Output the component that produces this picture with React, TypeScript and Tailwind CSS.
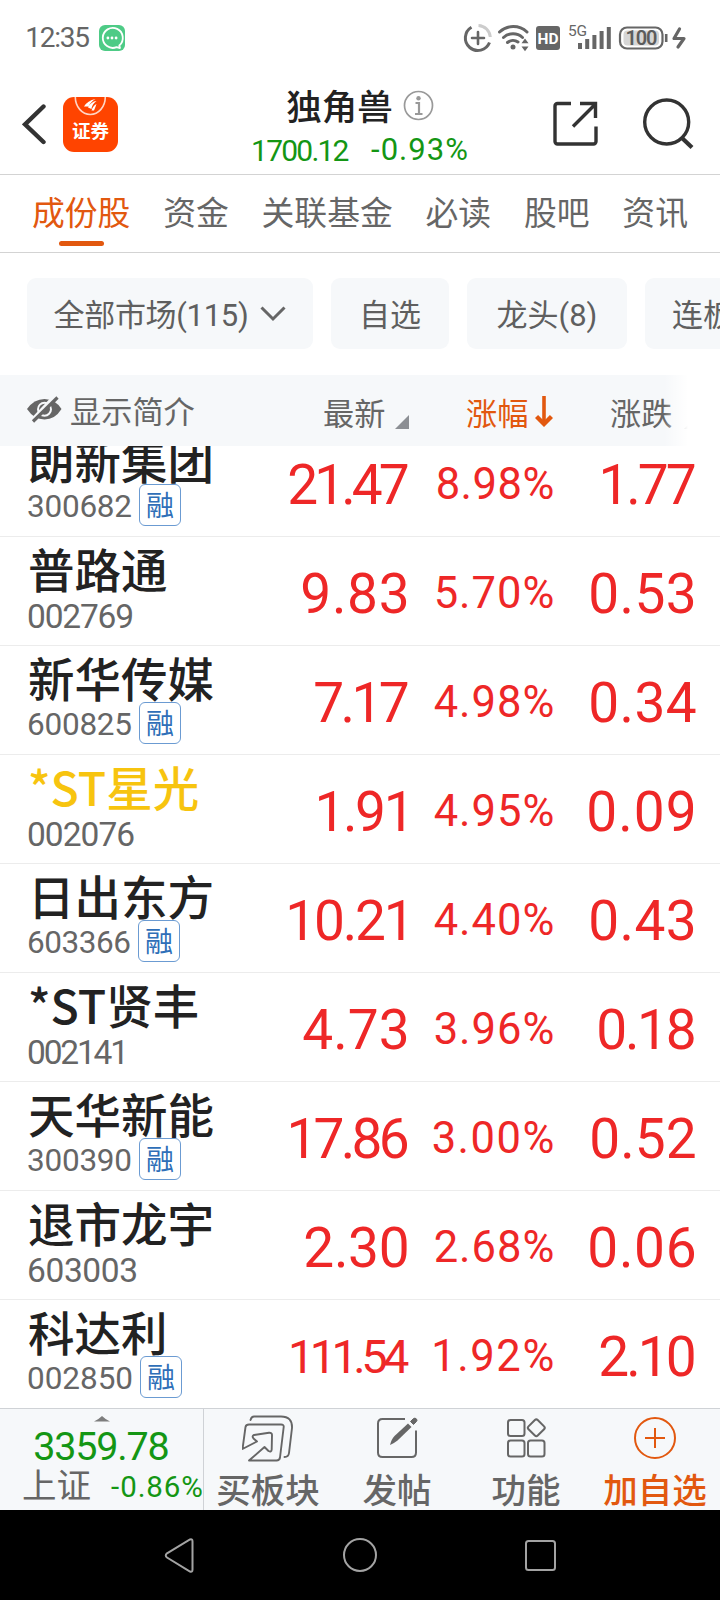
import React from "react";

const CJK = "font-['Noto_Sans_CJK_SC',sans-serif]";
const NUM = "font-['Roboto','Noto_Sans_CJK_SC',sans-serif]";

/* Each figure is a text with the width, in pixels, that its ink takes. */
type Figure = [text: string, width: number];

type Stock = {
  name: string;
  code: Figure;
  price: Figure;
  pct: Figure;
  chg: Figure;
  margin?: boolean;
  highlight?: boolean;
};

const stocks: Stock[] = [
  { name: "朗新集团", code: ["300682", 103], price: ["21.47", 119], pct: ["8.98%", 116], chg: ["1.77", 93], margin: true },
  { name: "普路通", code: ["002769", 105], price: ["9.83", 106], pct: ["5.70%", 118], chg: ["0.53", 105] },
  { name: "新华传媒", code: ["600825", 103], price: ["7.17", 93], pct: ["4.98%", 118], chg: ["0.34", 105], margin: true },
  { name: "*ST星光", code: ["002076", 106], price: ["1.91", 90], pct: ["4.95%", 118], chg: ["0.09", 107], highlight: true },
  { name: "日出东方", code: ["603366", 102], price: ["10.21", 119], pct: ["4.40%", 118], chg: ["0.43", 105], margin: true },
  { name: "*ST贤丰", code: ["002141", 97], price: ["4.73", 104], pct: ["3.96%", 118], chg: ["0.18", 97] },
  { name: "天华新能", code: ["300390", 103], price: ["17.86", 118], pct: ["3.00%", 120], chg: ["0.52", 104], margin: true },
  { name: "退市龙宇", code: ["603003", 109], price: ["2.30", 103], pct: ["2.68%", 118], chg: ["0.06", 106] },
  { name: "科达利", code: ["002850", 104], price: ["111.54", 117], pct: ["1.92%", 119], chg: ["2.10", 95], margin: true },
];

const advances: Record<string, number> = { ".": 0.264, "%": 0.733, "-": 0.276, ":": 0.242 };

function Fig({ fig, size, className = "" }: { fig: Figure; size: number; className?: string }) {
  const [text, width] = fig;
  const left = (text.startsWith("1") ? 0.065 : 0.03) * size;
  const right = (text.endsWith("1") ? 0.12 : 0.03) * size;
  const natural = text.split("").reduce((sum, c) => sum + (advances[c] ?? 0.5617) * size, 0);
  const spacing = (width - (natural - left - right)) / (text.length - 1);
  return (
    <span
      className={`${NUM} whitespace-nowrap [font-kerning:none] ${className}`}
      style={{ fontSize: size, letterSpacing: spacing, marginLeft: -left, marginRight: -spacing - right }}
    >
      {text}
    </span>
  );
}

function StatusBar() {
  return (
    <div className="flex h-[75px] shrink-0 items-center justify-between pr-[34px] pl-[27px]">
      <div className="flex items-center gap-[10px]">
        <Fig fig={["12:35", 62]} size={28} className="leading-[30px] text-[#666]" />
        <svg width="26" height="26" viewBox="0 0 26 26">
          <rect width="26" height="26" rx="6" fill="#4ecb86" />
          <path d="M20.3 20.5 L21 23 L17.5 22.2 A10 10 0 1 1 20.3 20.5Z" fill="none" stroke="#fff" strokeWidth="1.8" strokeLinejoin="round" />
          <circle cx="8.9" cy="13" r="1.4" fill="#fff" />
          <circle cx="13" cy="13" r="1.4" fill="#fff" />
          <circle cx="17.1" cy="13" r="1.4" fill="#fff" />
        </svg>
      </div>
      <svg width="224" height="32" viewBox="462 21 224 32" fill="none">
        <g stroke="#666" strokeWidth="3">
          <path d="M471.500 26.200 A12.500 12.500 0 1 0 489.500 41.500" />
          <path d="M478.5 24.5 A12.5 12.5 0 0 1 490.3 36" stroke="#ccc" />
          <path d="M478 31v12M472 37h12" strokeWidth="2.6" strokeLinecap="round" />
        </g>
        <g stroke="#666" strokeWidth="3" strokeLinecap="round">
          <path d="M499.5 31 A20 20 0 0 1 527 31" />
          <path d="M503.5 36.5 A14 14 0 0 1 522.5 36.5" />
          <path d="M507.5 41.5 A8.5 8.5 0 0 1 518 41" />
        </g>
        <circle cx="513" cy="46" r="2.5" fill="#666" />
        <path d="M525 37.5l3.5 4.7h-7zM525 50.3l3.5-4.7h-7z" fill="#666" />
        <rect x="536" y="25" width="24" height="24" rx="3" fill="#666" />
        <text x="548" y="42.500" textAnchor="middle" fontFamily="Roboto" fontWeight="700" fontSize="15.500" fill="#fff" textLength="21" lengthAdjust="spacingAndGlyphs">HD</text>
        <text x="568" y="35" fontFamily="Roboto" fontSize="15.500" fill="#666" textLength="19">5G</text>
        <path d="M580 48v-6M587.2 48v-10M594.4 48v-14M601.6 48v-18M608.8 48v-22" stroke="#666" strokeWidth="4" />
        <rect x="620" y="26.5" width="42.5" height="21" rx="7" stroke="#666" strokeWidth="2.2" />
        <rect x="623.5" y="29.5" width="35.5" height="15" rx="4" fill="#d6d6d6" />
        <text x="641.5" y="44" textAnchor="middle" fontFamily="Roboto" fontWeight="600" fontSize="20" fill="#5c5c5c" textLength="32">100</text>
        <path d="M666.2 33v8" stroke="#666" strokeWidth="2.6" />
        <path d="M679.500 28l-5.500 9.500h10l-6 8.500" stroke="#666" strokeWidth="3.200" strokeLinecap="round" strokeLinejoin="round" />
      </svg>
    </div>
  );
}

function Header() {
  return (
    <header className="flex h-[100px] shrink-0 border-b border-[#d3d3d3]">
      <div className="flex w-[253px] items-start pl-[22px] pt-[22px]">
        <svg width="26" height="54" viewBox="22 97 26 54">
          <path d="M43.5 106.5L25 124.3L43.5 142" fill="none" stroke="#333" strokeWidth="4.4" strokeLinecap="round" />
        </svg>
        <div className="relative ml-[15px] flex h-[55px] w-[55px] justify-center overflow-hidden rounded-[11px] bg-[#ff4400]">
          <svg className="absolute inset-0" width="55" height="55" viewBox="0 0 55 55">
            <path d="M12.3 0A15 17.5 0 0 0 42.3 0" fill="none" stroke="#ffd5c5" strokeWidth="1.600" />
            <path d="M21 9.500Q24.500 3.500 32.500 2Q27.500 5 25.500 9.500ZM25 10.500Q28 4.500 33.500 4Q29 7 28.500 12ZM28.500 13.500Q30 8.500 33.500 7Q32.500 10 31 13.500Z" fill="#fff" />
          </svg>
          <span className={`${CJK} pt-[20px] text-[18.5px] leading-[26px] font-bold text-white`}>证券</span>
        </div>
      </div>
      <div className="flex w-[214px] flex-col items-center">
        <div className="mt-[9px] flex h-[42px] items-center gap-[10px]">
          <span className={`${CJK} text-[35.5px] leading-[42px] font-medium whitespace-nowrap text-[#222]`}>独角兽</span>
          <svg className="mt-[1px]" width="31" height="31" viewBox="0 0 31 31">
            <circle cx="15.5" cy="15.5" r="14" fill="none" stroke="#999" strokeWidth="1.7" />
            <circle cx="15.5" cy="8.3" r="2.2" fill="#999" />
            <path d="M12.500 13h3.500v11M12 24h7.500" stroke="#999" strokeWidth="2.200" fill="none" />
          </svg>
        </div>
        <div className="mt-[7px] flex h-[34px] w-full items-center justify-between text-[#149614]">
          <Fig fig={["1700.12", 95.5]} size={30} />
          <Fig fig={["-0.93%", 95]} size={31} />
        </div>
      </div>
      <svg className="mt-[17px] ml-[80px]" width="160" height="64" viewBox="547 92 160 64" fill="none" stroke="#333" strokeWidth="3.400">
        <path d="M571 103.500h-13.500a2.500 2.500 0 0 0-2.500 2.500v35.500a2.500 2.500 0 0 0 2.500 2.500h36a2.500 2.500 0 0 0 2.500-2.500v-15" />
        <path d="M580 103.500h15.500v14.500M595.500 104L573 126.500" />
        <circle cx="666.7" cy="122" r="22" />
        <path d="M682 138L692 147.500" strokeWidth="4.200" />
      </svg>
    </header>
  );
}

const tabs = ["成份股", "资金", "关联基金", "必读", "股吧", "资讯"];

function Tabs() {
  return (
    <nav className="flex h-[78px] shrink-0 justify-between border-b border-[#d3d3d3] px-[32px]">
      {tabs.map((t, i) => (
        <div key={t} className="flex flex-col items-center pt-[13px]">
          <span className={`${CJK} text-[32.8px] leading-[46px] whitespace-nowrap ${i === 0 ? "text-[#e2580f]" : "text-[#666]"}`}>{t}</span>
          {i === 0 && <span className="mt-[7px] h-[5px] w-[45px] rounded-full bg-[#e2580f]" />}
        </div>
      ))}
    </nav>
  );
}

function Filters() {
  const pill = `flex h-[71px] shrink-0 items-center justify-center rounded-[9px] bg-[#f6f8fa] pt-[5px] text-[31px] whitespace-nowrap text-[#5f5f5f] ${NUM}`;
  return (
    <div className="flex h-[122px] shrink-0 gap-[18px] overflow-hidden pt-[25px] pl-[27px]">
      <div className={`${pill} w-[286px] gap-[12px]`}>
        <span className="tracking-[-0.3px]">全部市场(115)</span>
        <svg className="-mt-[5px]" width="26" height="16" viewBox="0 0 26 16">
          <path d="M1.500 1.500L13 13L24.500 1.500" fill="none" stroke="#666" strokeWidth="3" />
        </svg>
      </div>
      <div className={`${pill} w-[118px]`}>自选</div>
      <div className={`${pill} w-[160px]`}>龙头(8)</div>
      <div className={`${pill} w-[116px]`}>连板</div>
    </div>
  );
}

function TableHead() {
  return (
    <div className={`${CJK} relative flex h-[71px] shrink-0 items-center bg-[#f6f8fa] text-[31.200px] leading-[40px] whitespace-nowrap text-[#666]`}>
      <div className="flex w-[323px] items-center gap-[8px] pb-[2px] pl-[27px]">
        <svg width="35" height="28" viewBox="0 0 35 28">
          <path d="M0 13Q7 3 17.5 3Q28 3 34.5 13Q28 23.5 17.5 23.5Q7 23.5 0 13Z" fill="#666" />
          <circle cx="17.5" cy="13.2" r="6.5" fill="none" stroke="#f6f8fa" strokeWidth="2" />
          <path d="M3 26.5L28 0" stroke="#f6f8fa" strokeWidth="4" />
          <path d="M6 25.5L30.5 1.5" stroke="#666" strokeWidth="3.2" />
        </svg>
        <span>显示简介</span>
      </div>
      <div className="flex w-[143px] items-center pt-[2px]">
        <span>最新</span>
        <svg className="mt-[21px] ml-[10px]" width="14" height="14" viewBox="0 0 14 14"><path d="M14 0V14H0Z" fill="#8c8f94" /></svg>
      </div>
      <div className="flex w-[144px] items-center pt-[2px] text-[#e2580f]">
        <span>涨幅</span>
        <svg className="ml-[7px]" width="18" height="32" viewBox="0 0 18 32">
          <path d="M9 0V28" stroke="#e2580f" strokeWidth="3.6" />
          <path d="M1.5 20.5L9 28L16.5 20.5" fill="none" stroke="#e2580f" strokeWidth="4.4" />
        </svg>
      </div>
      <div className="flex items-center pt-[2px]">
        <span>涨跌</span>
        <svg className="mt-[21px] ml-[12px]" width="14" height="14" viewBox="0 0 14 14"><path d="M14 0V14H0Z" fill="#8c8f94" /></svg>
      </div>
      <div className="absolute top-0 right-0 h-full w-[56px] bg-linear-to-r from-white/0 to-white to-[24px]" />
    </div>
  );
}

function Row({ s }: { s: Stock }) {
  return (
    <div className="flex h-[109px] shrink-0 items-start border-t border-[#ececec] text-[#ee2727]">
      <div className="w-[248px] shrink-0 pl-[28px]">
        <div className={`${CJK} mt-[6px] h-[48px] text-[46.5px] leading-[50px] font-medium whitespace-nowrap ${s.highlight ? "text-[#f7c40f]" : "text-[#222]"}`}>{s.name}</div>
        <div className="mt-[2px] flex h-[42px] items-center gap-[8px] text-[#666]">
          <Fig fig={s.code} size={s.margin ? 31.5 : 33.5} className={s.margin ? "mt-[3px] leading-[42px]" : "mt-[5px] leading-[42px]"} />
          {s.margin && (
            <span className={`${CJK} flex h-[42px] w-[42px] items-center justify-center rounded-[6px] border-[1.5px] border-[#6b9bd2] text-[28px] leading-[38px] text-[#2f6fb8]`}>
              <span className="-mt-[2px]">融</span>
            </span>
          )}
        </div>
      </div>
      <div className="flex h-[115px] w-[160px] items-center justify-end">
        <Fig fig={s.price} size={s.price[0].length > 5 ? 47 : 55} />
      </div>
      <div className="flex h-[113px] w-[145px] items-center justify-end">
        <Fig fig={s.pct} size={43.5} />
      </div>
      <div className="flex h-[115px] w-[142px] items-center justify-end">
        <Fig fig={s.chg} size={55} />
      </div>
    </div>
  );
}

function BuyIcon() {
  return (
    <svg width="54" height="50" viewBox="242 1413 54 50" fill="none" stroke="#666" strokeWidth="1.900" strokeLinejoin="round" strokeLinecap="round">
      <path d="M250.500 1420Q251.500 1416.500 254 1416.500H281Q292.500 1416.500 292 1428L289 1453Q288.500 1457 284.500 1457" />
      <path d="M242.500 1449L245.500 1427Q246 1424.500 249 1424.500H281Q284 1424.500 283.700 1427L280 1457.500Q279.500 1460.500 276.500 1460.500H249L264.500 1447L268.500 1451Q271.500 1452.500 271.700 1449.500L272 1435Q272 1432.500 269 1432.700L254 1435Q251.500 1436 253.500 1438.500L257 1441.500Z" />
    </svg>
  );
}
function PostIcon() {
  return (
    <svg width="44" height="50" viewBox="376 1413 44 50" fill="none" stroke="#666" strokeWidth="2">
      <path d="M405 1419H382.500Q378 1419 378 1423.500V1452.500Q378 1457 382.500 1457H411.500Q416 1457 416 1452.500V1430.500" />
      <path d="M390 1445Q391.500 1439 394.500 1436L408 1423.500L411.500 1427L397.500 1440.500Q394.500 1443 390 1445Z" fill="#666" stroke="none" />
      <path d="M410.500 1421.500L413.500 1418.500Q415 1417.500 416.500 1419Q417.500 1420.500 416.500 1421.500L413.500 1424.500Z" fill="#666" stroke="#666" strokeWidth="1" />
    </svg>
  );
}
function GridIcon() {
  return (
    <svg width="44" height="50" viewBox="505 1413 44 50" fill="none" stroke="#666" strokeWidth="2">
      <rect x="508" y="1420" width="16.5" height="16" rx="2.5" />
      <rect x="508" y="1440.5" width="16.5" height="16" rx="2.5" />
      <rect x="528" y="1440.5" width="16.5" height="16" rx="2.5" />
      <rect x="529.8" y="1421.3" width="13" height="13" rx="2" transform="rotate(45 536.3 1427.8)" />
    </svg>
  );
}
function AddIcon() {
  return (
    <svg width="44" height="50" viewBox="634 1413 44 50" fill="none" stroke="#e2580f" strokeWidth="2">
      <circle cx="655" cy="1438" r="20" />
      <path d="M655 1428v20M645 1438h20" />
    </svg>
  );
}

const actions = [
  { label: "买板块", icon: <BuyIcon /> },
  { label: "发帖", icon: <PostIcon /> },
  { label: "功能", icon: <GridIcon /> },
  { label: "加自选", icon: <AddIcon />, active: true },
];

function BottomBar() {
  return (
    <div className="flex h-[102px] shrink-0 border-t border-[#cfd2d6] bg-[#f6f8fa]">
      <div className="flex w-[204px] shrink-0 flex-col items-center border-r border-[#cfd2d6] text-[#149614]">
        <svg className="mt-[7px]" width="18" height="6" viewBox="0 0 18 6"><path d="M1 5.500Q6 3 9 0Q12 3 17 5.500Z" fill="#7d7d7d" /></svg>
        <div className="flex h-[46px] items-center pt-[4px]"><Fig fig={["3359.78", 134]} size={39.5} /></div>
        <div className="-mt-[4px] flex h-[42px] w-full items-center justify-between pr-[1px] pl-[22px]">
          <span className={`${CJK} -mt-[4px] text-[34.5px] leading-[38px] text-[#666]`}>上证</span>
          <Fig fig={["-0.86%", 90]} size={29.5} className="mt-[4px]" />
        </div>
      </div>
      <div className="flex grow">
        {actions.map((a) => (
          <div key={a.label} className={`flex w-[129px] flex-col items-center pt-[4px] ${a.active ? "text-[#e2580f]" : "text-[#666]"}`}>
            {a.icon}
            <span className={`${CJK} mt-[4px] pr-[1px] text-[34.5px] leading-[42px] font-medium whitespace-nowrap`}>{a.label}</span>
          </div>
        ))}
      </div>
    </div>
  );
}

function SystemNav() {
  return (
    <div className="flex h-[90px] shrink-0 items-center justify-between bg-black px-[162px]">
      <svg width="36" height="40" viewBox="0 0 36 40"><path d="M5 18.3L28 4.500Q30.500 3.500 30.500 6.500V34.500Q30.500 37.500 28 36.500L5 22.500Q2.500 20.500 5 18.3Z" fill="none" stroke="#a3a3a3" strokeWidth="2" /></svg>
      <svg width="36" height="36" viewBox="0 0 36 36"><circle cx="18" cy="18" r="16" fill="none" stroke="#a3a3a3" strokeWidth="2" /></svg>
      <svg width="36" height="36" viewBox="0 0 36 36"><rect x="4" y="4" width="29" height="29" rx="2.5" fill="none" stroke="#a3a3a3" strokeWidth="2" /></svg>
    </div>
  );
}

export default function App() {
  return (
    <div className="flex h-[1600px] w-[720px] flex-col overflow-hidden bg-white">
      <StatusBar />
      <Header />
      <Tabs />
      <Filters />
      <TableHead />
      <main className="flex h-[962px] shrink-0 flex-col justify-end overflow-hidden">
        {stocks.map((s) => (
          <Row key={s.name} s={s} />
        ))}
      </main>
      <BottomBar />
      <SystemNav />
    </div>
  );
}
